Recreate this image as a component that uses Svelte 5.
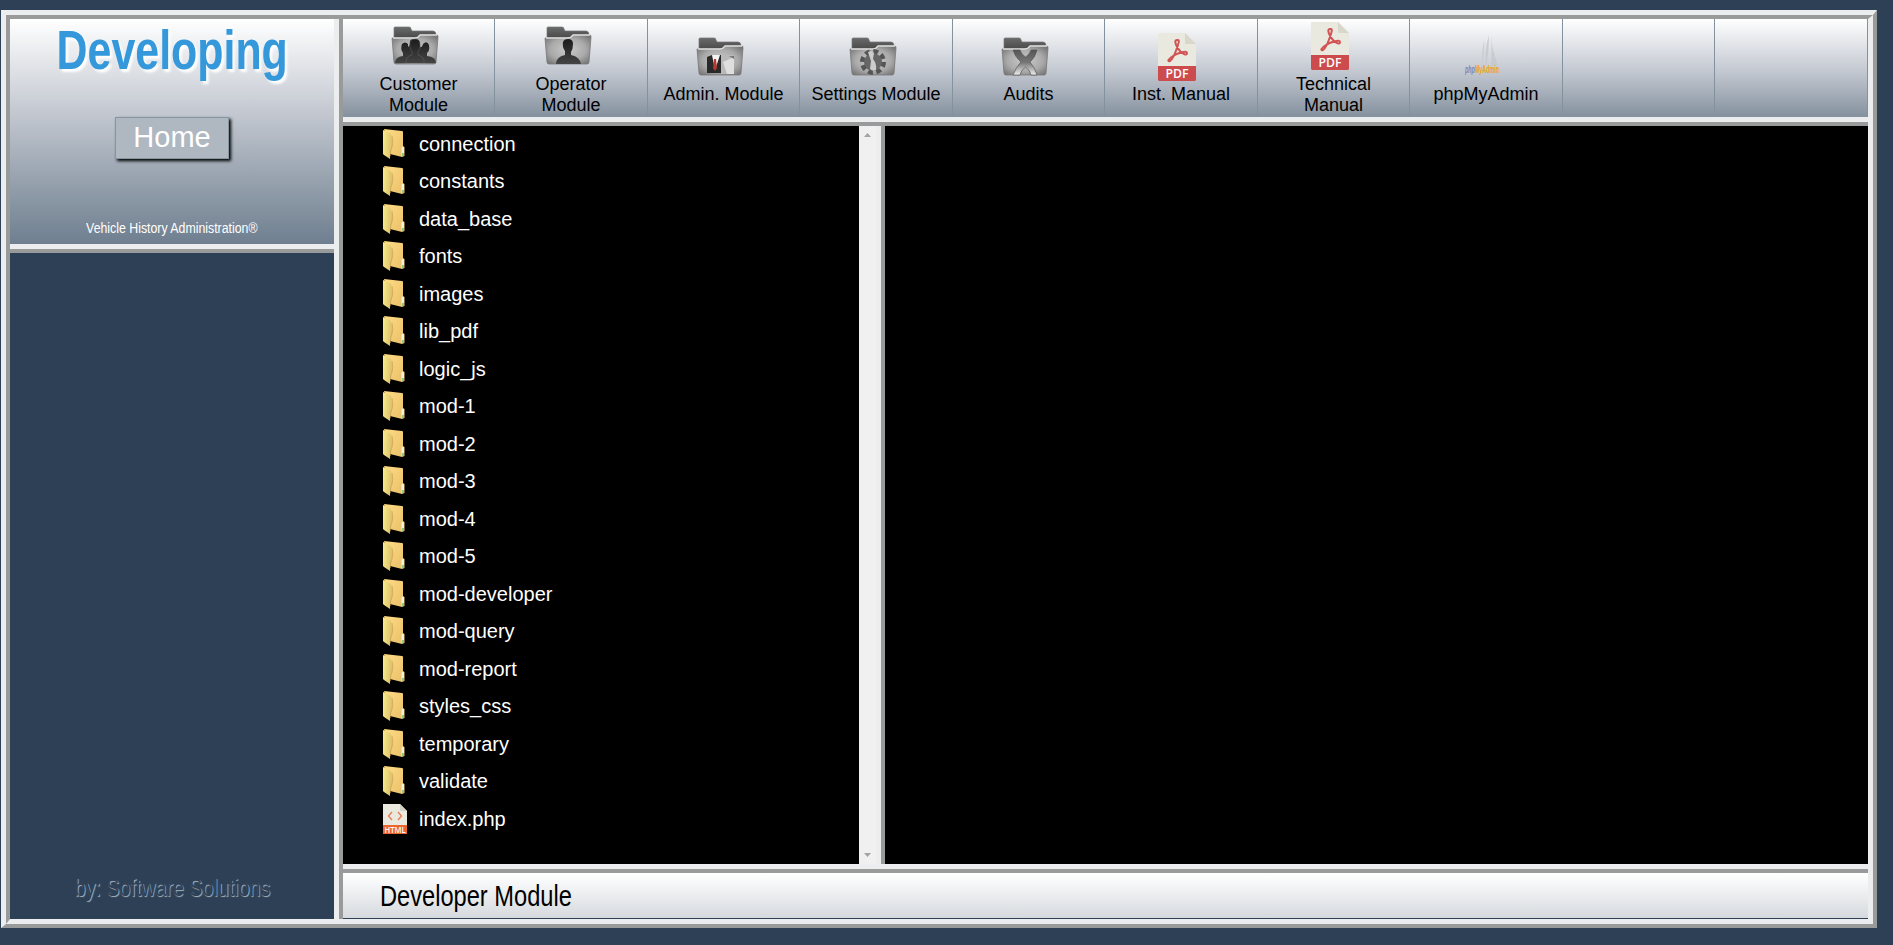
<script>
  const modules = [
    { label: 'Customer Module', icon: 'group' },
    { label: 'Operator Module', icon: 'user' },
    { label: 'Admin. Module', icon: 'suit' },
    { label: 'Settings Module', icon: 'gear' },
    { label: 'Audits', icon: 'cross' },
    { label: 'Inst. Manual', icon: 'pdf' },
    { label: 'Technical Manual', icon: 'pdf' },
    { label: 'phpMyAdmin', icon: 'pma' },
    { label: '', icon: '' },
    { label: '', icon: '' }
  ];
  const folders = ['connection', 'constants', 'data_base', 'fonts', 'images', 'lib_pdf', 'logic_js',
    'mod-1', 'mod-2', 'mod-3', 'mod-4', 'mod-5', 'mod-developer', 'mod-query', 'mod-report',
    'styles_css', 'temporary', 'validate', 'index.php'];
</script>

<svg class="defs" aria-hidden="true">
  <defs>
    <radialGradient id="face" cx=".5" cy=".5" r=".7"><stop offset="0" stop-color="#cbcbcb" /><stop offset=".55" stop-color="#aaa" /><stop offset="1" stop-color="#686868" /></radialGradient>
    <linearGradient id="back" x2="0" y2="1"><stop offset="0" stop-color="#6a6a6a" /><stop offset="1" stop-color="#444" /></linearGradient>
    <linearGradient id="body" x2="0" y2="1"><stop offset="0" stop-color="#1b1b1b" /><stop offset="1" stop-color="#444" /></linearGradient>
    <linearGradient id="chrome" x2="0" y2="1"><stop offset="0" stop-color="#555" /><stop offset=".5" stop-color="#777" /><stop offset="1" stop-color="#eee" /></linearGradient>
    <linearGradient id="flap" x2="1" y2=".2"><stop offset="0" stop-color="#faec8c" /><stop offset="1" stop-color="#dcc26c" /></linearGradient>
    <linearGradient id="rear" x2="1" y2="1"><stop offset="0" stop-color="#ffdc83" /><stop offset="1" stop-color="#e9bf6a" /></linearGradient>
  </defs>
</svg>

<div class="frame">
  <div class="bevel">
    <aside>
      <header>
        <h1><span>Developing</span></h1>
        <button>Home</button>
        <p><span>Vehicle History Administration®</span></p>
      </header>
      <div class="side"><span>by: Software Solutions</span></div>
    </aside>
    <main>
      <nav>
        {#each modules as m}
          <div class="cell">
            {#if m.icon === 'pdf'}
              <svg class="icon pdf" viewBox="0 0 38 48">
                <path d="M1 0H27L38 11V34H0V1Z" fill="#e9e9e0" />
                <path d="M27 0L38 11H28Q27 11 27 10Z" fill="#d8d7ca" />
                <path d="M19 7C15 7 19 15 22 18S29 23 29 20S20 20 15 23S9 29 12 28S18 18 20 12S20 7 19 7Z" fill="none" stroke="#d15354" stroke-width="2" />
                <path d="M0 33H38V47L37 48H1L0 47Z" fill="#cc4b4c" />
                <text x="19" y="45" text-anchor="middle" textLength="23" lengthAdjust="spacingAndGlyphs" font-family="Open Sans, sans-serif" font-weight="600" font-size="12" fill="#fff">PDF</text>
              </svg>
            {:else if m.icon === 'pma'}
              <svg class="icon pma" viewBox="0 0 34 48">
                <path d="M19 7Q17 18 17 33Q20 18 19 7M24 2Q19 17 21 34Q24 19 24 2M26 2Q27 16 26 33Q29 33 33 32Q27 18 26 2" fill="#c4c7ca" opacity=".75" />
                <text transform="translate(0 40) scale(.49 1)" font-family="Liberation Sans, sans-serif" font-weight="bold" font-size="11"><tspan fill="#7b86b8" font-style="italic">php</tspan><tspan fill="#f0a020">MyAdmin</tspan></text>
              </svg>
            {:else if m.icon}
              <svg class="icon folder" viewBox="0 0 48 48">
                <path d="M3 6Q3 5 4 5H18Q20 5 20 7L21 9H42Q45 9 45 13V18H3Z" fill="url(#back)" stroke="#777" stroke-width=".7" />
                <path d="M1 16H23Q26 16 28 13H46Q47 13 47 15L45 40Q45 42 43 42H5Q3 42 3 40Z" fill="url(#face)" stroke="#777" stroke-width=".8" />
                <path d="M2 16H24Q27 16 29 13H46" fill="none" stroke="#e1e1e1" stroke-width="1.3" />
                {#if m.icon === 'group'}
                  <path d="M4 41Q4 35 12 34V31Q9 27 11 22Q14 19 17 22V25Q20 22 19 21Q18 17 24 17Q30 17 28 25Q31 26 32 22Q36 18 38 23Q39 29 36 31V34Q45 35 45 41Z" fill="url(#body)" />
                  <path d="M15 41Q15 34 21 33V29Q18 27 19 20Q20 17 24 17Q29 17 29 22Q30 27 27 30V33Q34 35 33 41" fill="url(#body)" stroke="#666" stroke-width=".5" />
                {:else if m.icon === 'user'}
                  <path d="M12 42Q12 35 21 33V29Q18 25 19 20Q20 17 24 17Q29 17 29 22Q29 27 27 30V33Q36 35 37 42Z" fill="url(#body)" />
                {:else if m.icon === 'suit'}
                  <path d="M11 24L16 22H25V40H11Z" fill="#292929" />
                  <path d="M25 22H38V41H25Z" fill="#b9b9b9" /><path d="M27 29L38 24V41H31Z" fill="#dedede" /><path d="M33 23H38V26Z" fill="#777" />
                  <path d="M16 22H24L19 37Z" fill="#f4f4f4" /><path d="M18 26H20L21 35L19 38L17 35Z" fill="#b13a32" />
                {:else if m.icon === 'gear'}
                  <circle cx="24" cy="29" r="10" fill="none" stroke="#555" stroke-width="6" stroke-dasharray="4.6 3.25" /><circle cx="24" cy="29" r="9" fill="#666" />
                  <path d="M19 19Q23 17 25 20L24 26Q28 31 27 37Q24 39 21 36L22 28Z" fill="#ccc" />
                {:else}
                  <path d="M12 17H19Q20 21 24.5 24Q29 21 30 17H36Q34 25 29 29Q34 35 36 42H30Q29 37 24.5 34Q20 37 19 42H12Q15 34 20 29Q14 24 12 17Z" fill="url(#chrome)" stroke="#555" stroke-width=".7" />
                {/if}
              </svg>
            {/if}
            <div class="label">{m.label}</div>
          </div>
        {/each}
      </nav>
      <section class="work">
        <div class="tree">
          <ul>
            {#each folders as name}
              <li>
                {#if name === 'index.php'}
                  <svg class="html" viewBox="0 0 24 30">
                    <path d="M0 0H17L24 7V22H0Z" fill="#e9e9e0" /><path d="M17 0L24 7H17Z" fill="#d3d2c6" />
                    <path d="M9 8L5.5 12L9 16M15 8L18.5 12L15 16" fill="none" stroke="#ec7d55" stroke-width="1.4" />
                    <path d="M0 21H24V30H0Z" fill="#ec6630" />
                    <text x="12" y="28.5" text-anchor="middle" textLength="21" lengthAdjust="spacingAndGlyphs" font-family="Open Sans, sans-serif" font-weight="600" font-size="8" fill="#fff">HTML</text>
                  </svg>
                {:else}
                  <svg class="dir" viewBox="0 0 24 30">
                    <path d="M1 0L19 2Q20 2 20 3V17L21.5 18V27L19 28L7 25Z" fill="url(#rear)" />
                    <path d="M0 1L8 5Q9.5 12 9 17Q7 21 7 30L1 26L0 25Z" fill="url(#flap)" />
                    <path d="M9 7Q10.5 14 9 18Q7 21 7.5 27" fill="none" stroke="#b98f45" stroke-width=".8" opacity=".7" />
                    <path d="M18.5 19Q19 17 21 18.5V27H18.5Z" fill="#f5f0d9" /><path d="M19 24H21V27H19Z" fill="#8fc882" />
                  </svg>
                {/if}
                <span>{name}</span>
              </li>
            {/each}
          </ul>
          <div class="scroll">
            <svg width="7" height="4" viewBox="0 0 7 4"><path d="M0 4L3.5 0L7 4Z" fill="#a3a3a3" /></svg>
            <svg width="7" height="4" viewBox="0 0 7 4"><path d="M0 0L3.5 4L7 0Z" fill="#a3a3a3" /></svg>
          </div>
        </div>
        <div class="view"></div>
      </section>
      <footer><span>Developer Module</span></footer>
    </main>
  </div>
</div>

<style>
  :global(body) { background: #2e4055; font-family: "Liberation Sans", Arial, sans-serif; overflow: hidden; }
  .defs { display: block; width: 0; height: 0; }
  .frame { box-sizing: border-box; width: 1876px; height: 918px; margin: 10px 0 0 1px; border: solid; border-width: 5px 4px 4px 5px; border-color: #ebedee #999b9b #999b9b #ebedee; }
  .bevel { box-sizing: border-box; height: 100%; border: solid; border-width: 4px 5px 5px 4px; border-color: #999b9b #ebedee #ebedee #999b9b; display: flex; }
  aside { width: 324px; display: flex; flex-direction: column; border-right: 5px solid #ebedee; }
  header { height: 225px; background: linear-gradient(#fff, #c1c6cf 43%, #8996a3 81%, #6f7f90); border-bottom: 5px solid #ebedee; display: flex; flex-direction: column; align-items: center; }
  h1 { margin: 0; height: 98px; font-size: 55px; line-height: 63px; color: #3498db; text-shadow: 3px 3px 3px #fff; }
  h1 span { display: inline-block; transform: scaleX(.78); }
  button { box-sizing: border-box; width: 114px; height: 42px; padding: 0 0 3px; border: 1px solid #8794a1; background: #afb7c1; color: #fff; font: 29px/38px "Liberation Sans", Arial, sans-serif; box-shadow: 2px 2px 3px #000; }
  p { margin: 55px 0 0; font-size: 15.5px; line-height: 28px; color: #fff; }
  p span { display: inline-block; transform: scaleX(.795); white-space: nowrap; }
  .side { flex: 1; border-top: 4px solid #999b9b; display: flex; align-items: end; justify-content: center; padding-bottom: 16px; font-size: 23px; line-height: 29px; color: #2e4055; text-shadow: 1px 1px 1px #a9b3bd; }
  .side span { transform: scaleX(.855); white-space: nowrap; }
  main { flex: 1; min-width: 0; display: flex; flex-direction: column; border-left: 4px solid #999b9b; }
  nav { height: 98px; display: grid; grid-template-columns: 152px 153px 152px 153px 152px 153px 152px 153px 152px 153px; background: linear-gradient(#fff, #c1c6cf 55%, #84919e); border-bottom: 5px solid #ebedee; }
  .cell { border-right: 1px solid #84919e; display: flex; flex-direction: column; align-items: center; justify-content: center; text-align: center; font-size: 18px; line-height: 21px; color: #000; padding-top: 1px; }
  .icon { width: 38px; height: 48px; margin: 0 8px 3px 0; flex: none; }
  .icon.folder { width: 48px; margin-right: 7px; }
  .icon.pma { width: 34px; margin-right: 9px; }
  .label { width: 132px; }
  .cell:nth-child(-n+2) .label, .cell:nth-child(7) .label { width: 90px; padding-top: 1px; margin-bottom: -1px; }
  .work { flex: 1; min-height: 0; display: flex; border-top: 4px solid #999b9b; border-bottom: 5px solid #ebedee; background: #000; }
  .tree { width: 533px; display: flex; border-right: 5px solid #ebedee; }
  ul { flex: 1; list-style: none; margin: -0.3px 0 0; padding: 0 0 0 40px; }
  li { height: 37.5px; display: flex; gap: 12px; color: #fff; font-size: 20px; line-height: 36px; }
  li svg { width: 24px; height: 30px; margin-top: 3px; }
  .scroll { width: 17px; background: #f0f0f0; display: flex; flex-direction: column; justify-content: space-between; align-items: center; padding: 7px 0; box-sizing: border-box; }
  .view { flex: 1; border-left: 4px solid #999b9b; }
  footer { height: 45px; border-top: 4px solid #999b9b; border-bottom: 1px solid #2e4055; background: linear-gradient(#fff, #d6dade); padding-left: 37px; font-size: 29px; line-height: 46px; }
  footer span { display: inline-block; transform: scaleX(.815); transform-origin: left; }
</style>
